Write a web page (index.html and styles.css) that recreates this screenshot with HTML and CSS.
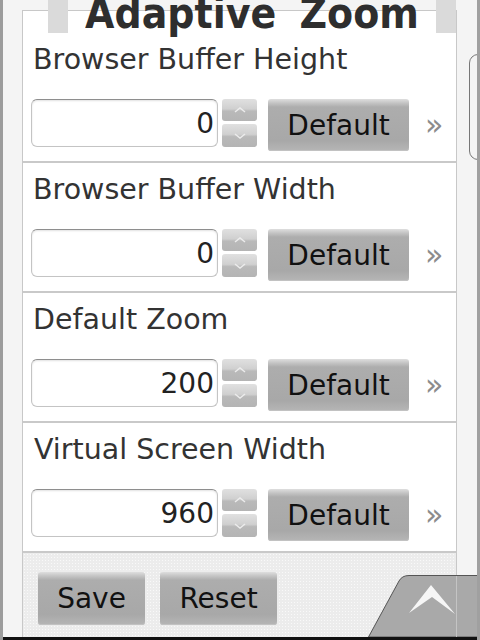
FILE: index.html
```html
<!DOCTYPE html>
<html>
<head>
<meta charset="utf-8">
<link rel="stylesheet" href="styles.css">
</head>
<body>
<div class="screen">
  <div class="panel">
    <div class="legend">
      <span class="legend-block legend-block-left"></span>
      <span class="legend-title"><span class="legend-text">Adaptive Zoom</span></span>
      <span class="legend-block"></span>
    </div>

    <div class="row">
      <div class="label">Browser Buffer Height</div>
      <div class="controls">
        <div class="field">0</div>
        <div class="spinner">
          <span class="spin spin-up"><svg width="12" height="6" viewBox="0 0 12 6"><polyline points="1,5 6,1 11,5" fill="none" stroke="#ececec" stroke-width="1.5"/></svg></span>
          <span class="spin spin-down"><svg width="12" height="6" viewBox="0 0 12 6"><polyline points="1,1 6,5 11,1" fill="none" stroke="#ececec" stroke-width="1.5"/></svg></span>
        </div>
        <div class="btn btn-default">Default</div>
        <span class="more">»</span>
      </div>
    </div>

    <div class="row">
      <div class="label">Browser Buffer Width</div>
      <div class="controls">
        <div class="field">0</div>
        <div class="spinner">
          <span class="spin spin-up"><svg width="12" height="6" viewBox="0 0 12 6"><polyline points="1,5 6,1 11,5" fill="none" stroke="#ececec" stroke-width="1.5"/></svg></span>
          <span class="spin spin-down"><svg width="12" height="6" viewBox="0 0 12 6"><polyline points="1,1 6,5 11,1" fill="none" stroke="#ececec" stroke-width="1.5"/></svg></span>
        </div>
        <div class="btn btn-default">Default</div>
        <span class="more">»</span>
      </div>
    </div>

    <div class="row">
      <div class="label">Default Zoom</div>
      <div class="controls">
        <div class="field">200</div>
        <div class="spinner">
          <span class="spin spin-up"><svg width="12" height="6" viewBox="0 0 12 6"><polyline points="1,5 6,1 11,5" fill="none" stroke="#ececec" stroke-width="1.5"/></svg></span>
          <span class="spin spin-down"><svg width="12" height="6" viewBox="0 0 12 6"><polyline points="1,1 6,5 11,1" fill="none" stroke="#ececec" stroke-width="1.5"/></svg></span>
        </div>
        <div class="btn btn-default">Default</div>
        <span class="more">»</span>
      </div>
    </div>

    <div class="row">
      <div class="label label-v">Virtual Screen Width</div>
      <div class="controls">
        <div class="field">960</div>
        <div class="spinner">
          <span class="spin spin-up"><svg width="12" height="6" viewBox="0 0 12 6"><polyline points="1,5 6,1 11,5" fill="none" stroke="#ececec" stroke-width="1.5"/></svg></span>
          <span class="spin spin-down"><svg width="12" height="6" viewBox="0 0 12 6"><polyline points="1,1 6,5 11,1" fill="none" stroke="#ececec" stroke-width="1.5"/></svg></span>
        </div>
        <div class="btn btn-default">Default</div>
        <span class="more">»</span>
      </div>
    </div>

    <div class="footer">
      <div class="btn btn-save">Save</div>
      <div class="btn btn-reset">Reset</div>
    </div>
  </div>
  <div class="bottom-bar"></div>

  <div class="side-tab"></div>
  <svg class="corner-tab" width="112" height="62" viewBox="0 0 112 62">
    <path d="M0.5 62 L31 6 Q34 0.5 41 0.5 L112 0.5 L112 62 Z" fill="#a9a9a9" stroke="#555" stroke-width="1"/>
    <line x1="88.5" y1="1" x2="88.5" y2="62" stroke="#c4c4c4" stroke-width="1"/>
    <path d="M63 10 L87 39 L64 22 L41 38 Z" fill="#f6f6f6"/>
  </svg>
</div>
</body>
</html>
```

FILE: styles.css
```css
html, body {
  margin: 0;
  padding: 0;
}

body {
  width: 480px;
  height: 640px;
  overflow: hidden;
  background: #f4f4f4;
  font-family: "DejaVu Sans", Verdana, sans-serif;
}

.screen {
  position: relative;
  width: 480px;
  height: 640px;
  box-sizing: border-box;
  border-left: 3px solid #9c9c9c;
  border-right: 3px solid #a0a0a0;
  display: flex;
  flex-direction: column;
  overflow: hidden;
}

.panel {
  margin: 10px 0 0 19px;
  width: 435px;
  box-sizing: border-box;
  border: 1px solid #c8c8c8;
  border-bottom: none;
  background: #fff;
  flex: 1;
  display: flex;
  flex-direction: column;
}

.legend {
  margin-top: -11px;
  height: 33px;
  display: flex;
}

.legend-block {
  width: 20px;
  height: 33px;
  background: #dadada;
  flex: none;
}

.legend-block-left {
  margin-left: 25px;
}

.legend-title {
  flex: 1;
  text-align: center;
  font-weight: bold;
  font-size: 38px;
  line-height: 30px;
  color: #2e2e2e;
  word-spacing: 10px;
  white-space: nowrap;
}

.legend-text {
  display: inline-block;
  transform: scaleY(1.14);
  transform-origin: 50% 90%;
}

.row {
  padding: 10px 0;
  border-bottom: 2px solid #c9c9c9;
}

.label {
  font-size: 28.5px;
  line-height: 34px;
  color: #333;
  padding-left: 10px;
  margin-bottom: 22px;
  white-space: nowrap;
}

.label-v {
  padding-left: 11px;
}

.controls {
  display: flex;
  align-items: flex-start;
  height: 52px;
  padding-left: 8px;
}

.field {
  width: 187px;
  height: 48px;
  box-sizing: border-box;
  border: 1px solid #c4c4c4;
  border-top-color: #8e8e8e;
  border-radius: 6px;
  box-shadow: inset 0 1px 2px rgba(0, 0, 0, 0.12);
  background: #fff;
  text-align: right;
  padding-right: 3px;
  font-size: 28px;
  line-height: 48px;
  color: #222;
}

.spinner {
  margin-left: 4px;
  width: 35px;
  display: flex;
  flex-direction: column;
  gap: 3px;
}

.spin {
  display: flex;
  align-items: center;
  justify-content: center;
  border-radius: 3px;
  background: linear-gradient(#e0e0e0, #d0d0d0 45%, #b9b9b9 55%, #b4b4b4);
}

.spin-up {
  height: 22px;
}

.spin-down {
  height: 23px;
}

.btn {
  height: 52px;
  box-sizing: border-box;
  border-radius: 3px;
  background: linear-gradient(#dedede 0, #c4c4c4 4px, #adadad 8px, #a8a8a8 80%, #b6b6b6 100%);
  box-shadow: inset 0 -1px 0 #c2c2c2;
  color: #111;
  font-size: 28px;
  line-height: 54px;
  text-align: center;
}

.btn-default {
  margin-left: 11px;
  width: 141px;
}

.more {
  margin-left: 16px;
  font-size: 30px;
  line-height: 52px;
  color: #8c8c8c;
}

.footer {
  flex: 1;
  display: flex;
  align-items: flex-start;
  gap: 15px;
  padding: 19px 0 0 15px;
  background-color: #ececec;
  background-image: radial-gradient(rgba(255, 255, 255, 0.7) 0.7px, transparent 1px);
  background-size: 3px 3px;
}

.btn-save {
  width: 107px;
  height: 53px;
}

.btn-reset {
  width: 117px;
  height: 53px;
}

.bottom-bar {
  height: 3px;
  margin-left: -3px;
  margin-right: -3px;
  background: #111;
  flex: none;
}

.side-tab {
  position: absolute;
  left: 466px;
  top: 54px;
  width: 24px;
  height: 106px;
  box-sizing: border-box;
  border: 1px solid #777;
  border-radius: 9px;
  background: #f4f4f4;
}

.corner-tab {
  position: absolute;
  right: -3px;
  bottom: 3px;
}
```
